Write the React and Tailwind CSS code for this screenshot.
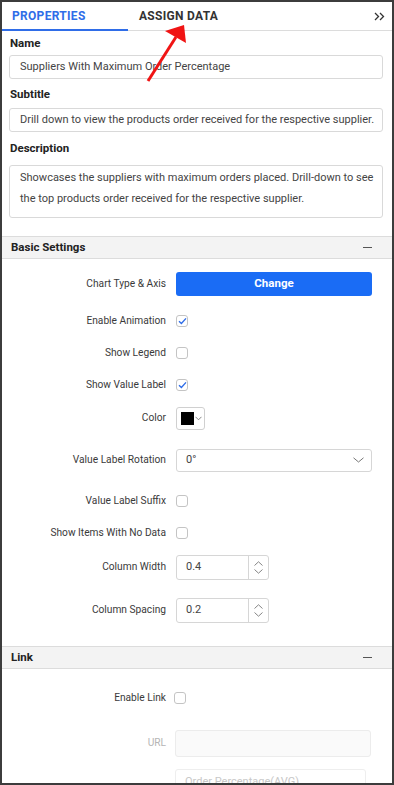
import React from "react";

const font = { fontFamily: "Roboto, 'Noto Sans', sans-serif" };

function Check({ checked }) {
  return (
    <div className="w-[12px] h-[12px] rounded-[3px] border border-[#c4c4c4] bg-white flex items-center justify-center">
      {checked && (
        <svg width="9" height="8" viewBox="0 0 9 8">
          <path d="M1 4.2 L3.4 6.4 L8 1.4" fill="none" stroke="#2f6de8" strokeWidth="1.4" />
        </svg>
      )}
    </div>
  );
}

function Row({ label, children, className = "", labelClass = "text-[#3a3a3a]" }) {
  return (
    <div className={"flex items-center h-[32px] " + className}>
      <div className={"w-[164px] text-right text-[10.2px] leading-[14px] " + labelClass}>{label}</div>
      <div className="ml-[10px] flex items-center">{children}</div>
    </div>
  );
}

function Spinner({ value }) {
  return (
    <div className="w-[93px] h-[25px] border border-[#d6d6d6] rounded-[3px] flex bg-white">
      <div className="flex-1 flex items-center pl-[9px] text-[11px] text-[#444]">{value}</div>
      <div className="w-[20px] border-l border-[#d6d6d6] flex flex-col items-center justify-center gap-[3px]">
        <svg width="9" height="5" viewBox="0 0 9 5"><path d="M0.5 4.5 L4.5 0.8 L8.5 4.5" fill="none" stroke="#777" strokeWidth="0.9" /></svg>
        <svg width="9" height="5" viewBox="0 0 9 5"><path d="M0.5 0.5 L4.5 4.2 L8.5 0.5" fill="none" stroke="#777" strokeWidth="0.9" /></svg>
      </div>
    </div>
  );
}

function SectionHeader({ title }) {
  return (
    <div className="h-[23px] bg-[#f3f3f3] border-y border-[#dcdcdc] flex items-center justify-between pl-[9px] pr-[20px]">
      <span className="text-[11.5px] font-bold text-[#222]">{title}</span>
      <span className="w-[9px] h-[1.5px] bg-[#555]"></span>
    </div>
  );
}

export default function App() {
  return (
    <div style={font} className="w-[394px] h-[785px] bg-white border-2 border-[#3c3c3c] overflow-hidden relative">
      {/* Tabs */}
      <div className="h-[29px] border-b border-[#dcdcdc] flex items-stretch relative">
        <div className="w-[126px] border-b-2 border-[#2f6de8] -mb-[1px] flex items-center pl-[10px]">
          <span className="text-[12px] font-bold tracking-[0.3px] text-[#2f6de8]">PROPERTIES</span>
        </div>
        <div className="flex items-center pl-[11px]">
          <span className="text-[12px] font-bold tracking-[0.3px] text-[#333]">ASSIGN DATA</span>
        </div>
        <div className="ml-auto flex items-center pr-[7px]">
          <svg width="11" height="9" viewBox="0 0 11 9">
            <path d="M1 1 L4.5 4.5 L1 8 M6 1 L9.5 4.5 L6 8" fill="none" stroke="#333" strokeWidth="1.3" />
          </svg>
        </div>
      </div>

      {/* Top fields */}
      <div className="pl-[7px] pr-[9px]">
        <div className="mt-[4px] h-[16px] leading-[16px] text-[11.5px] font-bold text-[#222] pl-[1px]">Name</div>
        <div className="mt-[4px] h-[24px] border border-[#d9d9d9] rounded-[3px] flex items-center pl-[10px] text-[11px] text-[#444]">
          Suppliers With Maximum Order Percentage
        </div>
        <div className="mt-[7px] h-[16px] leading-[16px] text-[11.5px] font-bold text-[#222] pl-[1px]">Subtitle</div>
        <div className="mt-[6px] h-[24px] border border-[#d9d9d9] rounded-[3px] flex items-center pl-[10px] text-[11px] text-[#444] whitespace-nowrap overflow-hidden">
          Drill down to view the products order received for the respective supplier.
        </div>
        <div className="mt-[8px] h-[16px] leading-[16px] text-[11.5px] font-bold text-[#222] pl-[1px]">Description</div>
        <div className="mt-[9px] h-[53px] border border-[#d9d9d9] rounded-[3px] pl-[10px] pr-[6px] pt-[1px] text-[11px] leading-[21px] text-[#444]">
          Showcases the suppliers with maximum orders placed. Drill-down to see the top products order received for the respective supplier.
        </div>
      </div>

      {/* Basic Settings */}
      <div className="mt-[18px]">
        <SectionHeader title="Basic Settings" />
        <div className="pt-[9px]">
          <Row label="Chart Type & Axis">
            <div className="w-[196px] h-[24px] rounded-[3px] bg-[#1a6cf5] flex items-center justify-center text-white text-[11.5px] font-bold">
              Change
            </div>
          </Row>
          <Row label="Enable Animation" className="mt-[5px]"><Check checked /></Row>
          <Row label="Show Legend"><Check /></Row>
          <Row label="Show Value Label"><Check checked /></Row>
          <Row label="Color" className="mt-[1px]">
            <div className="w-[29px] h-[23px] border border-[#d0d0d0] rounded-[3px] flex items-center pl-[4px] gap-[1px]">
              <div className="w-[13px] h-[13px] bg-black"></div>
              <svg width="7" height="5" viewBox="0 0 7 5"><path d="M0.5 0.8 L3.5 3.8 L6.5 0.8" fill="none" stroke="#777" strokeWidth="0.9" /></svg>
            </div>
          </Row>
          <Row label="Value Label Rotation" className="mt-[10px]">
            <div className="w-[196px] h-[23px] border border-[#d6d6d6] rounded-[3px] flex items-center justify-between pl-[9px] pr-[7px] text-[11px] text-[#444]">
              <span>0°</span>
              <svg width="11" height="6" viewBox="0 0 11 6"><path d="M0.5 0.8 L5.5 5 L10.5 0.8" fill="none" stroke="#777" strokeWidth="1" /></svg>
            </div>
          </Row>
          <Row label="Value Label Suffix" className="mt-[9px]"><Check /></Row>
          <Row label="Show Items With No Data"><Check /></Row>
          <Row label="Column Width" className="mt-[2px]"><Spinner value="0.4" /></Row>
          <Row label="Column Spacing" className="mt-[11px]"><Spinner value="0.2" /></Row>
        </div>
      </div>

      {/* Link */}
      <div className="mt-[20px]">
        <SectionHeader title="Link" />
        <div className="pt-[13px]">
          <div className="flex items-center h-[32px]">
            <div className="w-[164px] text-right text-[10.2px] text-[#3a3a3a]">Enable Link</div>
            <div className="ml-[8px]"><Check /></div>
          </div>
          <div className="flex items-center h-[32px] mt-[13px]">
            <div className="w-[164px] text-right text-[10.2px] text-[#b5b5b5]">URL</div>
            <div className="ml-[9px] w-[196px] h-[27px] border border-[#ececec] rounded-[3px] bg-[#fafafa]"></div>
          </div>
          <div className="ml-[173px] mt-[10px] w-[191px] h-[26px] border border-[#eeeeee] rounded-[3px] flex items-center pl-[9px] text-[11px] text-[#c8c8c8]">
            Order Percentage(AVG)
          </div>
        </div>
      </div>

      {/* Red annotation arrow */}
      <svg className="absolute left-0 top-0 pointer-events-none" width="394" height="100" viewBox="0 0 394 100">
        <line x1="146" y1="79" x2="174" y2="35" stroke="#f01414" strokeWidth="3" />
        <polygon points="182,23 163,29 184,41" fill="#f01414" />
      </svg>
    </div>
  );
}
